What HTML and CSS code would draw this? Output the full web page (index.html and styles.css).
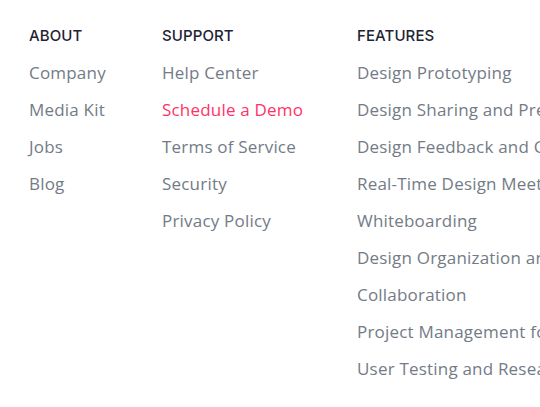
FILE: index.html
```html
<!DOCTYPE html>
<html>
<head>
<meta charset="utf-8">
<link rel="stylesheet" href="styles.css">
</head>
<body>
<div class="footer">
  <div class="col col-about">
    <h3 class="heading">ABOUT</h3>
    <ul class="links">
      <li><a class="link">Company</a></li>
      <li><a class="link">Media Kit</a></li>
      <li><a class="link">Jobs</a></li>
      <li><a class="link">Blog</a></li>
    </ul>
  </div>
  <div class="col col-support">
    <h3 class="heading">SUPPORT</h3>
    <ul class="links">
      <li><a class="link">Help Center</a></li>
      <li><a class="link link-active">Schedule a Demo</a></li>
      <li><a class="link">Terms of Service</a></li>
      <li><a class="link">Security</a></li>
      <li><a class="link">Privacy Policy</a></li>
    </ul>
  </div>
  <div class="col col-features">
    <h3 class="heading">FEATURES</h3>
    <ul class="links">
      <li><a class="link">Design Prototyping</a></li>
      <li><a class="link">Design Sharing and Presentation</a></li>
      <li><a class="link">Design Feedback and Collaboration</a></li>
      <li><a class="link">Real-Time Design Meetings</a></li>
      <li><a class="link">Whiteboarding</a></li>
      <li><a class="link">Design Organization and Management</a></li>
      <li><a class="link">Collaboration</a></li>
      <li><a class="link">Project Management for Designers</a></li>
      <li><a class="link">User Testing and Research</a></li>
    </ul>
  </div>
</div>
</body>
</html>
```
FILE: styles.css
```css
html, body {
  margin: 0;
  padding: 0;
  background: #ffffff;
  overflow: hidden;
}
.footer {
  display: flex;
  padding: 17px 0 0 29px;
  white-space: nowrap;
}
.col-about { width: 133px; flex: none; }
.col-support { width: 195px; flex: none; }
.col-features { flex: none; }
.heading {
  margin: 0;
  height: 37px;
  line-height: 37px;
  font-family: "Inter", sans-serif;
  font-weight: 500;
  font-size: 15px;
  letter-spacing: 0.1px;
  color: #1e2433;
}
.links {
  list-style: none;
  margin: 0;
  padding: 0;
}
.links li {
  height: 37px;
  line-height: 37px;
}
.link {
  font-family: "Open Sans", sans-serif;
  font-size: 17px;
  letter-spacing: 0.2px;
  color: #737b86;
  text-decoration: none;
}
.link-active {
  color: #ff3366;
}
```
